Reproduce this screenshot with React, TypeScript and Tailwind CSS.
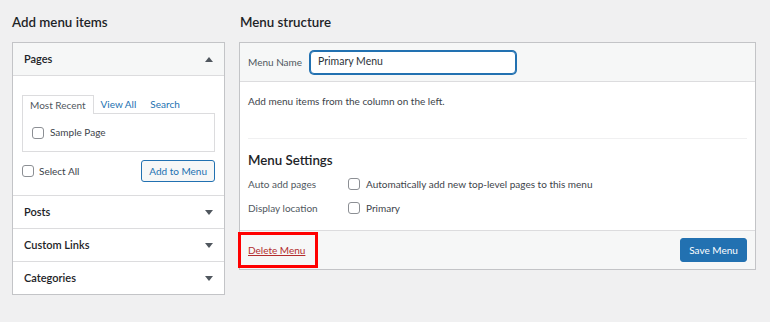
import React from "react";

function Checkbox() {
  return <span className="inline-block w-[12px] h-[12px] shrink-0 rounded-[3px] border border-[#8c8f94] bg-white" />;
}

function Caret({ up }: { up?: boolean }) {
  return (
    <svg width="8" height="5" viewBox="0 0 8 5" className="text-[#50575e]">
      {up ? <path d="M0 5 L4 0 L8 5 Z" fill="currentColor" /> : <path d="M0 0 L8 0 L4 5 Z" fill="currentColor" />}
    </svg>
  );
}

function Section({ title }: { title: string }) {
  return (
    <div className="h-[33px] border-t border-[#dcdcde] flex items-center justify-between pl-[11px] pr-[11px] bg-white">
      <span className="text-[11px] font-semibold text-[#1d2327]">{title}</span>
      <Caret />
    </div>
  );
}

export default function App() {
  return (
    <div className="min-h-screen bg-[#f0f0f1] font-['Lato',sans-serif] text-[#1d2327] flex gap-[14px] pl-[12px] pt-[12px]">
      {/* Left column */}
      <div className="w-[213px]">
        <h2 className="text-[13.3px] font-semibold leading-[20px] mb-[10px]">Add menu items</h2>
        <div className="border border-[#c3c4c7] bg-white">
          <div className="h-[32px] bg-[#f6f7f7] flex items-center justify-between px-[11px]">
            <span className="text-[11px] font-semibold">Pages</span>
            <Caret up />
          </div>
          <div className="border-t border-[#dcdcde] px-[9px] pt-[19px] pb-[13px]">
            <div className="flex text-[10px] leading-[18px]">
              <span className="relative z-10 -mb-px px-[7px] border border-b-0 border-[#dcdcde] bg-white text-[#50575e]">Most Recent</span>
              <span className="px-[7px] text-[#2271b1]">View All</span>
              <span className="px-[7px] text-[#2271b1]">Search</span>
            </div>
            <div className="h-[39px] border border-[#dcdcde] flex items-center gap-[6px] pl-[9px]">
              <Checkbox />
              <span className="text-[10px] text-[#3c434a]">Sample Page</span>
            </div>
            <div className="mt-[8px] flex items-center justify-between">
              <div className="flex items-center gap-[5px]">
                <Checkbox />
                <span className="text-[10px] text-[#3c434a]">Select All</span>
              </div>
              <button className="h-[22px] px-[7px] rounded-[3px] border border-[#2271b1] bg-[#f6f7f7] text-[10px] text-[#2271b1]">
                Add to Menu
              </button>
            </div>
          </div>
          <Section title="Posts" />
          <Section title="Custom Links" />
          <Section title="Categories" />
        </div>
      </div>

      {/* Right column */}
      <div className="w-[517px]">
        <h2 className="text-[13.3px] font-semibold leading-[20px] mb-[10px] pl-px">Menu structure</h2>
        <div className="border border-[#c3c4c7] bg-white">
          <div className="h-[39px] bg-[#f6f7f7] border-b border-[#dcdcde] flex items-center gap-[8px] px-[8px]">
            <span className="w-[54px] shrink-0 whitespace-nowrap text-[10px] text-[#50575e]">Menu Name</span>
            <div className="w-[206px] h-[23px] rounded-[4px] border border-[#2271b1] shadow-[0_0_0_1px_#2271b1] bg-white flex items-center px-[7px] text-[10.5px] text-[#2c3338]">
              Primary Menu
            </div>
          </div>
          <div className="px-[8px]">
            <p className="text-[10px] text-[#3c434a] pt-[12px] h-[56px]">Add menu items from the column on the left.</p>
            <div className="border-t border-[#f0f0f1]" />
            <h3 className="text-[13.3px] font-semibold mt-[11px] leading-[20px]">Menu Settings</h3>
            <div className="mt-[4px] flex items-center h-[20px] text-[10px]">
              <span className="w-[100px] text-[#50575e]">Auto add pages</span>
              <Checkbox />
              <span className="ml-[6px] text-[#3c434a]">Automatically add new top-level pages to this menu</span>
            </div>
            <div className="mt-[4px] mb-[12px] flex items-center h-[20px] text-[10px]">
              <span className="w-[100px] text-[#50575e]">Display location</span>
              <Checkbox />
              <span className="ml-[6px] text-[#3c434a]">Primary</span>
            </div>
          </div>
          <div className="h-[39px] border-t border-[#dcdcde] bg-[#f6f7f7] flex items-center justify-between px-[8px]">
            <span className="relative text-[10px] text-[#b32d2e] underline">
              Delete Menu
              <span className="absolute left-[-10px] right-[-13px] top-[-11px] bottom-[-10px] border-[3px] border-[#ff0000]" />
            </span>
            <button className="h-[24px] w-[67px] rounded-[3px] bg-[#2271b1] border border-[#2271b1] text-[10px] text-white">
              Save Menu
            </button>
          </div>
        </div>
      </div>
    </div>
  );
}
